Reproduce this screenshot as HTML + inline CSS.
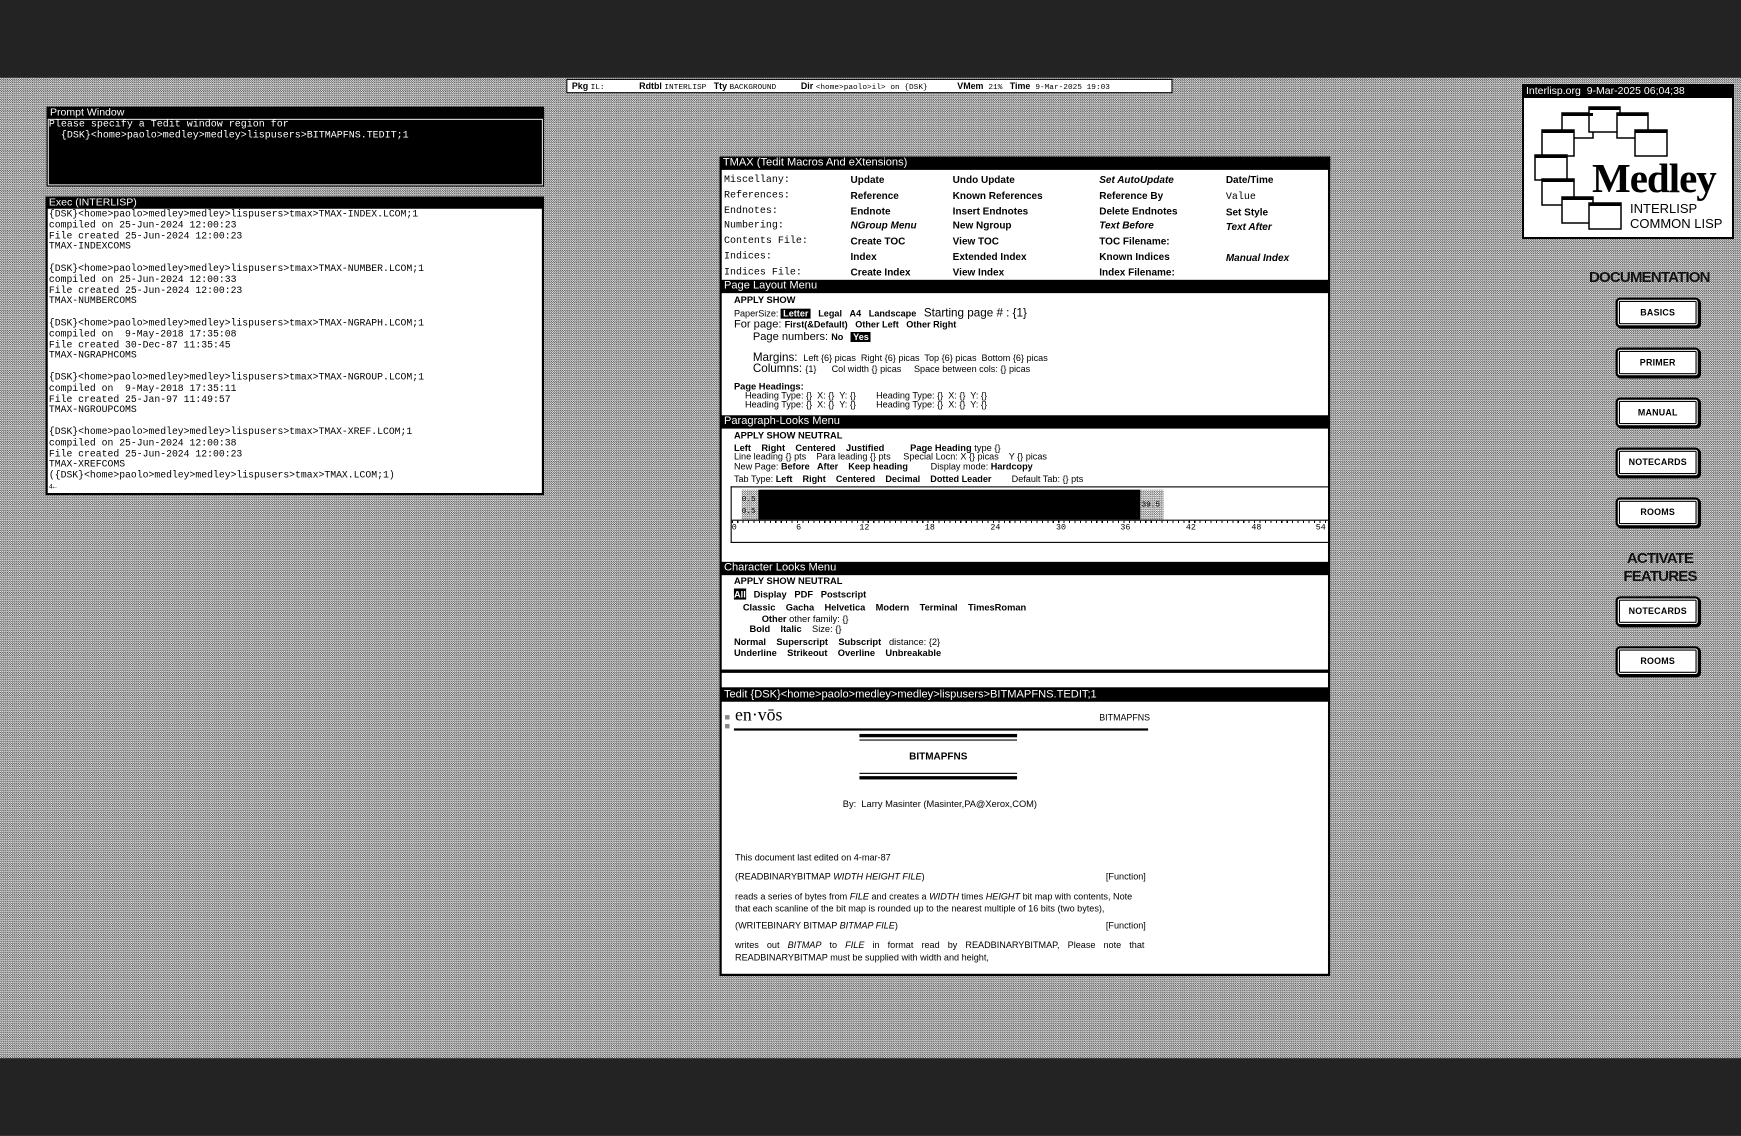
<!DOCTYPE html>
<html><head><meta charset="utf-8">
<style>
*{margin:0;padding:0;box-sizing:border-box}
html,body{width:1741px;height:1136px;overflow:hidden;background:#9c9c9c}
#c{position:absolute;left:0;top:0;width:1568px;height:1023px;transform:scale(1.11035);transform-origin:0 0;
 background:repeating-conic-gradient(#5a5a5a 0 25%,#e6e6e6 0 50%) 0 0/2px 2px}
.dark{position:absolute;left:0;width:1568px;background:#232323}
.a{position:absolute;white-space:pre;line-height:1}
.m{font-family:"Liberation Mono",monospace}
.s{font-family:"Liberation Sans",sans-serif}
.b{font-weight:bold}
.bar{position:absolute;background:#000;color:#fff;font-family:"Liberation Sans",sans-serif;font-size:9.5px;line-height:11px;padding-left:3px;white-space:pre}
.box{position:absolute;background:#fff;border:2px solid #000}
.btn{position:absolute;left:1455px;width:76px;height:27px;background:#fff;border:2px solid #000;border-radius:4px;box-shadow:1px 1px 0 #000, inset 0 0 0 1px #fff, inset 0 0 0 2px #000;font:bold 8px "Liberation Sans",sans-serif;text-align:center;line-height:23px;letter-spacing:.2px}
.tb{font-family:"Liberation Sans",sans-serif;font-size:9px;font-weight:bold}
.tm{font-family:"Liberation Mono",monospace;font-size:9px}
.sm{font-family:"Liberation Sans",sans-serif;font-size:8.2px}
.smb{font-family:"Liberation Sans",sans-serif;font-size:8.4px;font-weight:bold}
.hd{font-weight:bold;font-size:15px;font-family:"Liberation Sans",sans-serif;letter-spacing:-0.8px;position:absolute;white-space:pre;line-height:1;color:#111}
.tx{font-family:"Liberation Sans",sans-serif;font-size:8.2px}
</style></head><body>
<div id="c">
<div class="dark" style="top:0;height:70px"></div>
<div class="dark" style="top:953px;height:70px"></div>

<div class="box" style="left:510px;top:71px;width:546px;height:13px;border-width:1px"></div>
<div class="a s" style="left:515px;top:73.5px;font-size:8px"><b>Pkg</b> <span class="m" style="font-size:7px">IL:</span>              <b>Rdtbl</b> <span class="m" style="font-size:7px">INTERLISP</span>   <b>Tty</b> <span class="m" style="font-size:7px">BACKGROUND</span>          <b>Dir</b> <span class="m" style="font-size:7px">&lt;home&gt;paolo&gt;il&gt; on {DSK}</span>            <b>VMem</b>  <span class="m" style="font-size:7px">21%</span>   <b>Time</b>  <span class="m" style="font-size:7px">9-Mar-2025 19:03</span></div>

<div style="position:absolute;left:42px;top:97px;width:448px;height:71px;background:#000;border:1px solid #000"></div>
<div class="bar" style="left:42px;top:96px;width:448px">Prompt Window</div>
<div style="position:absolute;left:43px;top:107px;width:446px;height:60px;border:1px solid #ddd"></div>
<div class="a m" style="left:44px;top:108px;font-size:9px;color:#fff;line-height:9.5px">Please specify a Tedit window region for
  {DSK}&lt;home&gt;paolo&gt;medley&gt;medley&gt;lispusers&gt;BITMAPFNS.TEDIT;1</div>

<div class="box" style="left:41px;top:178px;width:449px;height:268px"></div>
<div class="bar" style="left:41px;top:177px;width:449px;height:11px">Exec (INTERLISP)</div>
<div class="a m" style="left:44px;top:189px;font-size:8.8px;line-height:9.8px">{DSK}&lt;home&gt;paolo&gt;medley&gt;medley&gt;lispusers&gt;tmax&gt;TMAX-INDEX.LCOM;1
compiled on 25-Jun-2024 12:00:23
File created 25-Jun-2024 12:00:23
TMAX-INDEXCOMS

{DSK}&lt;home&gt;paolo&gt;medley&gt;medley&gt;lispusers&gt;tmax&gt;TMAX-NUMBER.LCOM;1
compiled on 25-Jun-2024 12:00:33
File created 25-Jun-2024 12:00:23
TMAX-NUMBERCOMS

{DSK}&lt;home&gt;paolo&gt;medley&gt;medley&gt;lispusers&gt;tmax&gt;TMAX-NGRAPH.LCOM;1
compiled on  9-May-2018 17:35:08
File created 30-Dec-87 11:35:45
TMAX-NGRAPHCOMS

{DSK}&lt;home&gt;paolo&gt;medley&gt;medley&gt;lispusers&gt;tmax&gt;TMAX-NGROUP.LCOM;1
compiled on  9-May-2018 17:35:11
File created 25-Jan-97 11:49:57
TMAX-NGROUPCOMS

{DSK}&lt;home&gt;paolo&gt;medley&gt;medley&gt;lispusers&gt;tmax&gt;TMAX-XREF.LCOM;1
compiled on 25-Jun-2024 12:00:38
File created 25-Jun-2024 12:00:23
TMAX-XREFCOMS
({DSK}&lt;home&gt;paolo&gt;medley&gt;medley&gt;lispusers&gt;tmax&gt;TMAX.LCOM;1)
<span style="font-size:6px">4←</span></div>

<div class="box" style="left:648px;top:141px;width:550px;height:738px"></div>
<div class="bar" style="left:648px;top:141px;width:550px;height:12px;font-size:10px;line-height:12px">TMAX (Tedit Macros And eXtensions)</div>
<div class="a tm" style="left:652px;top:156px;line-height:13.8px">Miscellany:
References:
Endnotes:
Numbering:
Contents File:
Indices:
Indices File:</div>
<div class="a tb" style="left:766px;top:156px;line-height:13.8px">Update
Reference
Endnote
<i>NGroup Menu</i>
Create TOC
Index
Create Index</div>
<div class="a tb" style="left:858px;top:156px;line-height:13.8px">Undo Update
Known References
Insert Endnotes
New Ngroup
View TOC
Extended Index
View Index</div>
<div class="a tb" style="left:990px;top:156px;line-height:13.8px"><i>Set AutoUpdate</i>
Reference By
Delete Endnotes
<i>Text Before</i>
TOC Filename:
Known Indices
Index Filename:</div>
<div class="a tb" style="left:1104px;top:156px;line-height:13.8px">Date/Time
<span style="font-weight:normal" class="m">Value</span>
Set Style
<i>Text After</i>

<i>Manual Index</i></div>

<div class="bar" style="left:649px;top:252px;width:548px;height:12px;font-size:10px;line-height:12px">Page Layout Menu</div>
<div class="a smb" style="left:661px;top:266px">APPLY SHOW</div>
<div class="a sm" style="left:661px;top:277px">PaperSize: <b style="background:#000;color:#fff;padding:0 2px">Letter</b>   <b>Legal</b>   <b>A4</b>   <b>Landscape</b>   <span style="font-size:10.5px">Starting page # : {1}</span></div>
<div class="a sm" style="left:661px;top:288px"><span style="font-size:10px">For page: </span><b>First(&amp;Default)</b>   <b>Other Left</b>   <b>Other Right</b></div>
<div class="a sm" style="left:678px;top:299px"><span style="font-size:10px">Page numbers: </span><b>No</b>   <b style="background:#000;color:#fff;padding:0 2px">Yes</b></div>
<div class="a sm" style="left:678px;top:317px"><span style="font-size:10.5px">Margins: </span> Left {6} picas  Right {6} picas  Top {6} picas  Bottom {6} picas</div>
<div class="a sm" style="left:678px;top:327px"><span style="font-size:10.5px">Columns: </span>{1}      Col width {} picas     Space between cols: {} picas</div>
<div class="a smb" style="left:661px;top:344px">Page Headings:</div>
<div class="a sm" style="left:671px;top:353px;line-height:7.5px">Heading Type: {}  X: {}  Y: {}        Heading Type: {}  X: {}  Y: {}
Heading Type: {}  X: {}  Y: {}        Heading Type: {}  X: {}  Y: {}</div>

<div class="bar" style="left:649px;top:374px;width:548px;height:12px;font-size:10px;line-height:12px">Paragraph-Looks Menu</div>
<div class="a smb" style="left:661px;top:388px">APPLY SHOW NEUTRAL</div>
<div class="a smb" style="left:661px;top:399px">Left    Right    Centered    Justified          Page Heading <span style="font-weight:normal">type {}</span></div>
<div class="a sm" style="left:661px;top:408px">Line leading {} pts    Para leading {} pts     Special Locn: X {} picas    Y {} picas</div>
<div class="a sm" style="left:661px;top:417px">New Page: <b>Before   After    Keep heading</b>         Display mode: <b>Hardcopy</b></div>
<div class="a sm" style="left:661px;top:428px">Tab Type: <b>Left    Right    Centered    Decimal    Dotted Leader</b>        Default Tab: {} pts</div>
<div style="position:absolute;left:658px;top:438px;width:538px;height:51px;border:1px solid #000;border-right:none;background:#fff"></div>
<div style="position:absolute;left:668px;top:441px;width:15px;height:27px;background:repeating-conic-gradient(#666 0 25%,#fff 0 50%) 0 0/2px 2px"></div>
<div style="position:absolute;left:1027px;top:441px;width:21px;height:27px;background:repeating-conic-gradient(#666 0 25%,#fff 0 50%) 0 0/2px 2px"></div>
<div style="position:absolute;left:683px;top:441px;width:344px;height:27px;background:#000"></div>
<div class="a m" style="left:668px;top:445px;font-size:7px;line-height:11px">0.5
0.5</div>
<div class="a m" style="left:1028px;top:452px;font-size:7px">39.5</div>
<div style="position:absolute;left:659px;top:468px;width:537px;height:3px;border-top:1px solid #000;background:repeating-linear-gradient(90deg,#000 0 1px,transparent 1px 4.9px)"></div>
<div class="a m" style="left:659px;top:473px;font-size:7.5px">0</div>
<div class="a m" style="left:717px;top:473px;font-size:7.5px">6</div>
<div class="a m" style="left:774px;top:473px;font-size:7.5px">12</div>
<div class="a m" style="left:833px;top:473px;font-size:7.5px">18</div>
<div class="a m" style="left:892px;top:473px;font-size:7.5px">24</div>
<div class="a m" style="left:951px;top:473px;font-size:7.5px">30</div>
<div class="a m" style="left:1009px;top:473px;font-size:7.5px">36</div>
<div class="a m" style="left:1068px;top:473px;font-size:7.5px">42</div>
<div class="a m" style="left:1127px;top:473px;font-size:7.5px">48</div>
<div class="a m" style="left:1185px;top:473px;font-size:7.5px">54</div>

<div class="bar" style="left:649px;top:506px;width:548px;height:12px;font-size:10px;line-height:12px">Character Looks Menu</div>
<div class="a smb" style="left:661px;top:519px">APPLY SHOW NEUTRAL</div>
<div class="a smb" style="left:661px;top:531px"><span style="background:#000;color:#fff">All</span>   Display   PDF   Postscript</div>
<div class="a smb" style="left:669px;top:543px">Classic    Gacha    Helvetica    Modern    Terminal    TimesRoman</div>
<div class="a smb" style="left:686px;top:553px">Other <span style="font-weight:normal">other family: {}</span></div>
<div class="a smb" style="left:675px;top:562px">Bold    Italic    <span style="font-weight:normal">Size: {}</span></div>
<div class="a smb" style="left:661px;top:574px">Normal    Superscript    Subscript   <span style="font-weight:normal">distance: {2}</span></div>
<div class="a smb" style="left:661px;top:584px">Underline    Strikeout    Overline    Unbreakable</div>
<div style="position:absolute;left:649px;top:603px;width:548px;height:3px;background:#000"></div>

<div class="bar" style="left:649px;top:619px;width:548px;height:13px;font-size:10px;line-height:13px">Tedit {DSK}&lt;home&gt;paolo&gt;medley&gt;medley&gt;lispusers&gt;BITMAPFNS.TEDIT;1</div>
<div style="position:absolute;left:653px;top:644px;width:4px;height:4px;background:#888"></div>
<div style="position:absolute;left:653px;top:652px;width:4px;height:4px;background:#888"></div>
<div class="a" style="left:662px;top:637px;font-family:'Liberation Serif',serif;font-size:16px">en·vōs</div>
<div class="a s" style="left:990px;top:643px;font-size:8px">BITMAPFNS</div>
<div style="position:absolute;left:661px;top:656px;width:373px;height:2px;background:#000"></div>
<div style="position:absolute;left:774px;top:661px;width:142px;height:3px;background:#000"></div>
<div style="position:absolute;left:774px;top:666px;width:142px;height:1px;background:#000"></div>
<div class="a s b" style="left:774px;width:142px;text-align:center;top:677px;font-size:9px">BITMAPFNS</div>
<div style="position:absolute;left:774px;top:696px;width:142px;height:1px;background:#000"></div>
<div style="position:absolute;left:774px;top:699px;width:142px;height:3px;background:#000"></div>
<div class="a s" style="left:759px;top:720px;font-size:8.4px">By:  Larry Masinter (Masinter,PA@Xerox,COM)</div>
<div class="a tx" style="left:662px;top:769px">This document last edited on 4-mar-87</div>
<div class="a tx" style="left:662px;top:786px">(READBINARYBITMAP <i>WIDTH HEIGHT FILE</i>)</div>
<div class="a tx" style="left:996px;top:786px">[Function]</div>
<div class="a tx" style="left:662px;top:802px;line-height:11px">reads a series of bytes from <i>FILE</i> and creates a <i>WIDTH</i> times <i>HEIGHT</i> bit map with contents, Note
that each scanline of the bit map is rounded up to the nearest multiple of 16 bits (two bytes),</div>
<div class="a tx" style="left:662px;top:830px">(WRITEBINARY BITMAP <i>BITMAP FILE</i>)</div>
<div class="a tx" style="left:996px;top:830px">[Function]</div>
<div class="a tx" style="left:662px;top:848px;word-spacing:5px">writes out <i>BITMAP</i> to <i>FILE</i> in format read by READBINARYBITMAP, Please note that</div>
<div class="a tx" style="left:662px;top:859px">READBINARYBITMAP must be supplied with width and height,</div>

<div class="btn" style="top:268px">BASICS</div>
<div class="btn" style="top:313px">PRIMER</div>
<div class="btn" style="top:358px">MANUAL</div>
<div class="btn" style="top:403px">NOTECARDS</div>
<div class="btn" style="top:448px">ROOMS</div>
<div class="btn" style="top:537px">NOTECARDS</div>
<div class="btn" style="top:582px">ROOMS</div>
</div>

<div class="hd" style="left:1589px;top:270px">DOCUMENTATION</div>
<div class="hd" style="left:1580px;top:550px;width:160px;text-align:center;line-height:18px">ACTIVATE<br>FEATURES</div>

<div style="position:absolute;left:1522px;top:84px;width:212px;height:155px;background:#fff;border:2px solid #000"></div>
<div style="position:absolute;left:1522px;top:84px;width:212px;height:14px;background:#000;color:#fff;font:10.5px/14px 'Liberation Sans',sans-serif;padding-left:4px;white-space:pre">Interlisp.org  9-Mar-2025 06;04;38</div>
<svg style="position:absolute;left:0;top:0" width="1741" height="1136">
<g fill="#fff" stroke="#000" stroke-width="1.5">
<rect x="1562" y="113" width="31" height="25"/>
<rect x="1589" y="107" width="31" height="25"/>
<rect x="1617" y="113" width="31" height="25"/>
<rect x="1635" y="130" width="32" height="26"/>
<rect x="1542" y="130" width="32" height="26"/>
<rect x="1535" y="155" width="32" height="25"/>
<rect x="1542" y="179" width="32" height="26"/>
<rect x="1562" y="197" width="31" height="26"/>
<rect x="1589" y="203" width="32" height="26"/>
</g>
<g fill="#000">
<rect x="1562" y="113" width="31" height="3"/><rect x="1589" y="107" width="31" height="3"/><rect x="1617" y="113" width="31" height="3"/><rect x="1635" y="130" width="32" height="3"/><rect x="1542" y="130" width="32" height="3"/><rect x="1535" y="155" width="32" height="3"/><rect x="1542" y="179" width="32" height="3"/><rect x="1562" y="197" width="31" height="3"/><rect x="1589" y="203" width="32" height="3"/>
</g>
<rect x="1588" y="160" width="40" height="36" fill="#fff"/>
<text x="1592" y="192" font-family="Liberation Serif, serif" font-weight="bold" font-size="41" letter-spacing="-1">Medley</text>
<text x="1630" y="213" font-family="Liberation Sans, sans-serif" font-size="13">INTERLISP</text>
<text x="1630" y="228" font-family="Liberation Sans, sans-serif" font-size="13">COMMON LISP</text>
</svg>
</body></html>
